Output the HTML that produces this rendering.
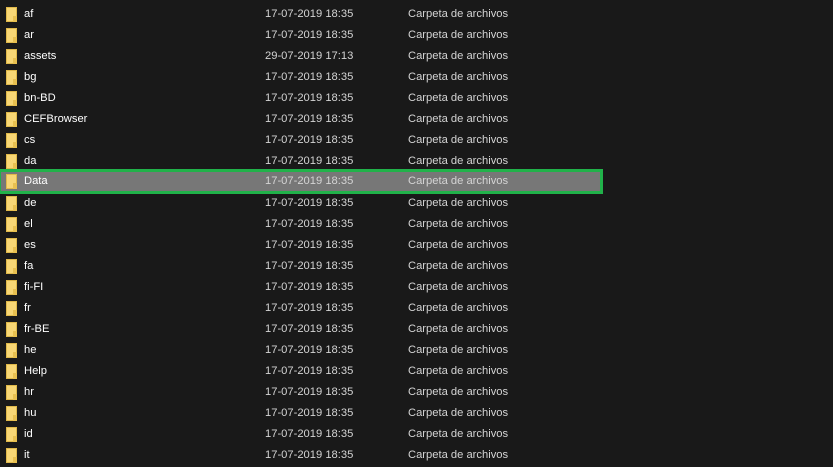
<!DOCTYPE html>
<html><head><style>
body{margin:0;width:833px;height:467px;background:#191919;overflow:hidden;font-family:"Liberation Sans",sans-serif;font-size:11.2px;position:relative}
.r{position:absolute;left:0;width:601px;height:21px;line-height:21px}
.r span{position:absolute;top:0}
.n{left:24px;color:#fff}
.d{left:265px;color:#d4d4d4}
.t{left:408px;color:#d4d4d4}
.i{position:absolute;left:6px;top:3px;width:11px;height:15px;background:#f8d775;border:1px solid #e0b94a;box-sizing:border-box}
.i:after{content:"";position:absolute;right:-1px;bottom:-1px;width:4px;height:6px;background:#e8c050}
.sel{background:#777;outline:3px solid #21b24a;outline-offset:-1px;top:171px!important}
</style></head><body>
<div id="c"></div>
<script>
var rows=[["af","17-07-2019 18:35"],["ar","17-07-2019 18:35"],["assets","29-07-2019 17:13"],["bg"],["bn-BD"],["CEFBrowser"],["cs"],["da"],["Data"],["de"],["el"],["es"],["fa"],["fi-FI"],["fr"],["fr-BE"],["he"],["Help"],["hr"],["hu"],["id"],["it"]];
var h="";
rows.forEach(function(r,i){
h+='<div class="r'+(r[0]=="Data"?' sel':'')+'" style="top:'+(4+21*i)+'px"><div class="i"></div><span class="n">'+r[0]+'</span><span class="d">'+(r[1]||"17-07-2019 18:35")+'</span><span class="t">Carpeta de archivos</span></div>';
});
document.getElementById("c").innerHTML=h;
</script>
</body></html>
